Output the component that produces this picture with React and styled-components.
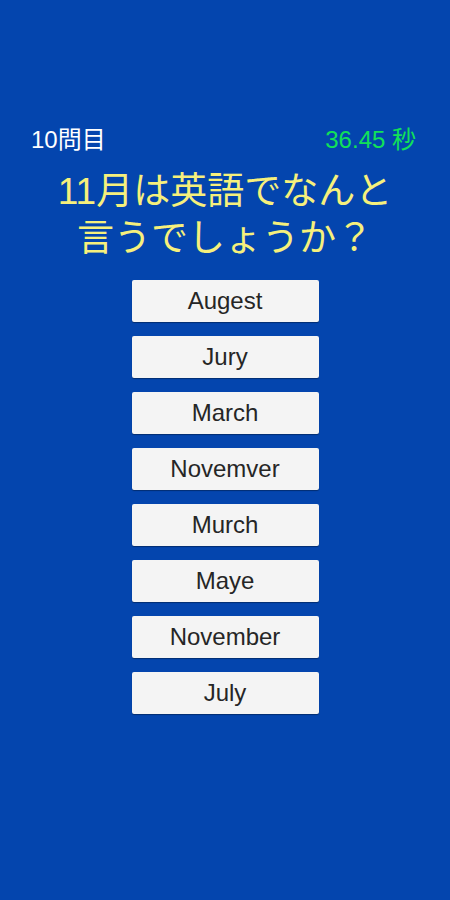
import React from 'react';
import styled, { createGlobalStyle } from 'styled-components';

const GlobalStyle = createGlobalStyle`
  html, body {
    margin: 0;
    padding: 0;
    background: #0445ae;
  }
  * { box-sizing: border-box; }
`;

const Screen = styled.div`
  width: 450px;
  height: 900px;
  background: #0445ae;
  display: flex;
  flex-direction: column;
  align-items: center;
  padding-top: 123px;
  font-family: "Liberation Sans", "Noto Sans CJK JP", sans-serif;
`;

const StatusBar = styled.div`
  width: 100%;
  display: flex;
  justify-content: space-between;
  align-items: center;
  padding: 0 34px 0 31px;
  height: 29px;
  font-size: 24px;
`;

const Count = styled.span`
  color: #ffffff;
`;

const Timer = styled.span`
  color: #12e158;
`;

const Question = styled.h1`
  margin: 16px 0 0;
  color: #f6f07c;
  font-size: 37px;
  font-weight: 400;
  line-height: 47px;
  text-align: center;
  white-space: nowrap;
`;

const Choices = styled.div`
  margin-top: 18px;
  display: flex;
  flex-direction: column;
  gap: 14px;
`;

const Choice = styled.button`
  width: 187px;
  height: 42px;
  border: none;
  border-radius: 2px;
  background: #f4f4f4;
  box-shadow: 0 1px 1px rgba(0, 0, 0, 0.35);
  color: #262626;
  font-family: "Liberation Sans", "Noto Sans CJK JP", sans-serif;
  font-size: 24px;
  padding: 0;
  cursor: pointer;
`;

const choices = ['Augest', 'Jury', 'March', 'Novemver', 'Murch', 'Maye', 'November', 'July'];

const App = () => (
  <>
    <GlobalStyle />
    <Screen>
      <StatusBar>
        <Count>10問目</Count>
        <Timer>36.45 秒</Timer>
      </StatusBar>
      <Question>
        11月は英語でなんと
        <br />
        言うでしょうか？
      </Question>
      <Choices>
        {choices.map((c) => (
          <Choice key={c}>{c}</Choice>
        ))}
      </Choices>
    </Screen>
  </>
);

export default App;
